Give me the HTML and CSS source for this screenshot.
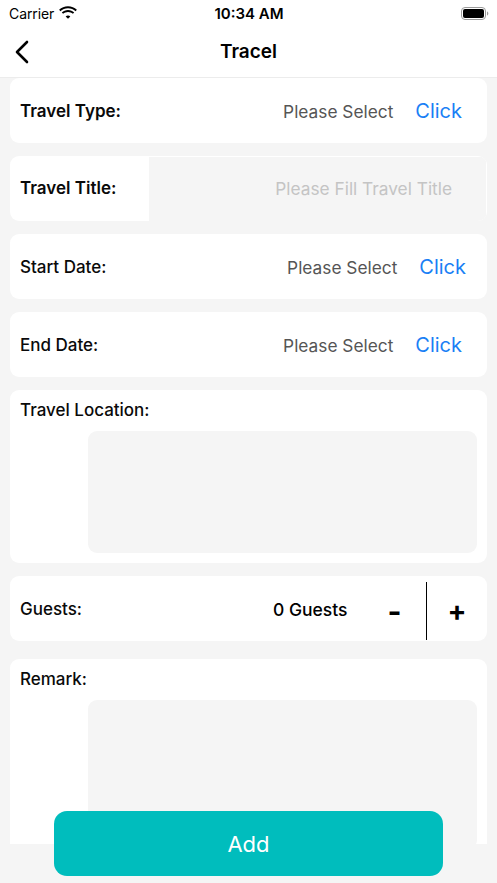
FILE: index.html
```html
<!DOCTYPE html>
<html>
<head>
<meta charset="utf-8">
<link rel="stylesheet" href="styles.css">
</head>
<body>
<div class="screen">
  <header class="top">
    <div class="status">
      <div class="status-left">
        <span class="carrier">Carrier</span>
        <svg class="wifi" width="18" height="13" viewBox="0 0 18 13">
          <path d="M9 2.2c2.9 0 5.6 1.1 7.6 3l1.3-1.4C15.5 1.5 12.4 0.2 9 0.2S2.5 1.5 0.1 3.8l1.3 1.4c2-1.9 4.7-3 7.6-3z" fill="#000"/>
          <path d="M9 5.9c1.9 0 3.6 0.7 4.9 1.9l1.3-1.4C13.6 4.8 11.4 3.9 9 3.9S4.4 4.8 2.8 6.4l1.3 1.4C5.4 6.6 7.1 5.9 9 5.9z" fill="#000"/>
          <path d="M9 9.5c0.9 0 1.7 0.3 2.3 0.9L9 12.8 6.7 10.4C7.3 9.8 8.1 9.5 9 9.5z" fill="#000"/>
        </svg>
      </div>
      <span class="time">10:34 AM</span>
      <div class="status-right">
        <svg width="28" height="13" viewBox="0 0 28 13">
          <rect x="0.5" y="0.5" width="24" height="12" rx="3.5" fill="none" stroke="#9a9a9a" stroke-width="1"/>
          <rect x="2" y="2" width="21" height="9" rx="2" fill="#000"/>
          <path d="M26 4.5v4c0.8-0.3 1.3-1.1 1.3-2s-0.5-1.7-1.3-2z" fill="#9a9a9a"/>
        </svg>
      </div>
    </div>
    <nav class="navbar">
      <svg class="back" width="16" height="24" viewBox="0 0 16 24">
        <path d="M13 2 L3 12 L13 22" fill="none" stroke="#000" stroke-width="2.6" stroke-linecap="round" stroke-linejoin="round"/>
      </svg>
      <h1 class="title">Tracel</h1>
    </nav>
  </header>

  <main class="content">
    <section class="card row">
      <span class="label strong">Travel Type:</span>
      <span class="value">Please Select</span>
      <span class="link">Click</span>
    </section>

    <section class="card row title-row">
      <span class="label strong">Travel Title:</span>
      <div class="input">Please Fill Travel Title</div>
    </section>

    <section class="card row row-wide">
      <span class="label">Start Date:</span>
      <span class="value">Please Select</span>
      <span class="link">Click</span>
    </section>

    <section class="card row">
      <span class="label">End Date:</span>
      <span class="value">Please Select</span>
      <span class="link">Click</span>
    </section>

    <section class="card block">
      <span class="label">Travel Location:</span>
      <div class="area"></div>
    </section>

    <section class="card row guests">
      <span class="label">Guests:</span>
      <span class="count">0 Guests</span>
      <span class="step minus">-</span>
      <span class="divider"></span>
      <span class="step plus">+</span>
    </section>

    <section class="card block remark">
      <span class="label">Remark:</span>
      <div class="area tall"></div>
    </section>
  </main>

  <button class="add">Add</button>
</div>
</body>
</html>
```

FILE: styles.css
```css
* { box-sizing: border-box; }
html, body {
  margin: 0;
  padding: 0;
}
body {
  font-family: Inter, "Noto Sans", "Liberation Sans", sans-serif;
  color: #000;
  background: #f5f5f5;
}
.screen {
  position: relative;
  width: 497px;
  height: 883px;
  overflow: hidden;
  background: #f5f5f5;
}
.top {
  background: #fff;
  border-bottom: 1px solid #ececec;
}
.status {
  height: 26px;
  display: flex;
  align-items: center;
  justify-content: space-between;
  padding: 0 8px 0 9px;
  position: relative;
}
.status-left {
  display: flex;
  align-items: center;
  gap: 5px;
  width: 100px;
}
.carrier {
  font-size: 14px;
  letter-spacing: -0.1px;
}
.wifi { margin-top: -2px; }
.time {
  font-size: 15px;
  font-weight: 600;
}
.status-right {
  width: 100px;
  display: flex;
  justify-content: flex-end;
  padding-top: 1px;
}
.navbar {
  height: 51px;
  display: flex;
  align-items: center;
  justify-content: center;
  position: relative;
}
.back {
  position: absolute;
  left: 14px;
  top: 14px;
}
.title {
  margin: 0;
  font-size: 19px;
  font-weight: 600;
}
.content {
  height: 766px;
  overflow: hidden;
  padding: 0 10px;
  display: flex;
  flex-direction: column;
  gap: 13px;
}
.card {
  background: #fff;
  border-radius: 9px;
  flex-shrink: 0;
}
.row {
  height: 65px;
  display: flex;
  align-items: center;
  padding: 1px 25px 0 10px;
}
.row-wide { padding-right: 21px; }
.label {
  font-size: 17px;
  line-height: 21px;
  font-weight: 500;
  color: #0a0a0a;
}
.label.strong { font-weight: 600; }
.value {
  margin-left: auto;
  font-size: 17.3px;
  color: #555;
}
.link {
  margin-left: 22px;
  font-size: 20px;
  color: #1a7ff5;
}
.title-row {
  padding: 0 1px 0 10px;
  overflow: hidden;
}
.input {
  margin-left: auto;
  width: 337px;
  height: 64px;
  background: #f5f5f5;
  display: flex;
  align-items: center;
  justify-content: flex-end;
  padding-right: 34px;
  font-size: 17.3px;
  color: #c4c4c4;
}
.block {
  display: flex;
  flex-direction: column;
  padding: 10px 10px 10px 10px;
}
.area {
  margin-left: 68px;
  margin-top: 10px;
  height: 122px;
  background: #f5f5f5;
  border-radius: 9px;
}
.remark {
  margin-top: 5px;
  height: 200px;
}
.area.tall { height: 200px; }
.guests { padding-right: 20px; }
.count {
  margin-left: auto;
  font-size: 17.5px;
  font-weight: 500;
}
.step {
  font-weight: 700;
  font-size: 28px;
  line-height: 1;
}
.minus {
  margin-left: 40px;
  width: 14px;
  text-align: center;
  font-size: 30px;
  margin-top: 3px;
}
.divider {
  width: 1.5px;
  height: 58px;
  background: #000;
  margin-left: 24px;
  margin-top: 3px;
}
.plus {
  margin-left: 20px;
  width: 20px;
  text-align: center;
  margin-top: 3px;
}
.add {
  position: absolute;
  left: 54px;
  top: 811px;
  width: 389px;
  height: 65px;
  border: none;
  border-radius: 13px;
  background: #00bdbd;
  color: #fff;
  font-family: Inter, "Noto Sans", sans-serif;
  font-size: 22px;
  font-weight: 400;
}
```
